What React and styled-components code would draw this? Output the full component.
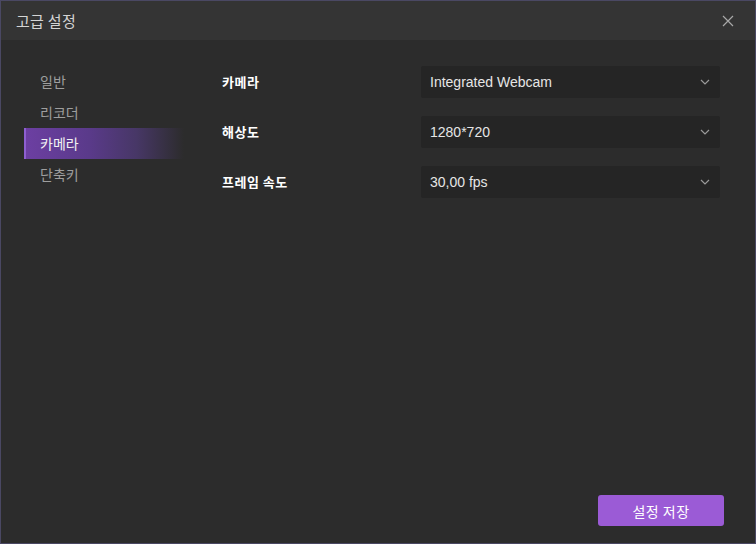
import React, { useState } from "react";
import styled, { createGlobalStyle } from "styled-components";

const GlobalStyle = createGlobalStyle`
	html, body {
		margin: 0;
		padding: 0;
		background: #2c2c2c;
	}
	* {
		box-sizing: border-box;
	}
`;

const menuItems = ["일반", "리코더", "카메라", "단축키"];

const fields = [
	{ label: "카메라", value: "Integrated Webcam" },
	{ label: "해상도", value: "1280*720" },
	{ label: "프레임 속도", value: "30,00 fps" },
];

function Chevron() {
	return (
		<svg width='10' height='6' viewBox='0 0 10 6'>
			<path d='M1 1 L5 5 L9 1' fill='none' stroke='#9a9a9a' strokeWidth='1.2' />
		</svg>
	);
}

function App() {
	const [active, setActive] = useState(2);

	return (
		<>
			<GlobalStyle />
			<Window>
				<TitleBar>
					<Title>고급 설정</Title>
					<CloseButton>
						<svg width='12' height='12' viewBox='0 0 12 12'>
							<path d='M1 1 L11 11 M11 1 L1 11' stroke='#a8a8a8' strokeWidth='1.2' />
						</svg>
					</CloseButton>
				</TitleBar>
				<Body>
					<Sidebar>
						{menuItems.map((item, i) => (
							<MenuItem key={item} $active={i === active} onClick={() => setActive(i)}>
								{item}
							</MenuItem>
						))}
					</Sidebar>
					<Content>
						{fields.map((field) => (
							<FieldRow key={field.label}>
								<FieldLabel>{field.label}</FieldLabel>
								<Select>
									<span>{field.value}</span>
									<Chevron />
								</Select>
							</FieldRow>
						))}
					</Content>
				</Body>
				<Footer>
					<SaveButton>설정 저장</SaveButton>
				</Footer>
			</Window>
		</>
	);
}

export default App;

const Window = styled.div`
	width: 756px;
	height: 544px;
	display: flex;
	flex-direction: column;
	background-color: #2c2c2c;
	border: 1px solid #4a4863;
	font-family: "Noto Sans CJK KR", "Noto Sans", sans-serif;
	overflow: hidden;
`;

const TitleBar = styled.div`
	height: 39px;
	flex-shrink: 0;
	display: flex;
	align-items: center;
	justify-content: space-between;
	padding: 0 15px 0 15px;
	background-color: #343434;
`;

const Title = styled.div`
	color: #d4d4d4;
	font-size: 15px;
	letter-spacing: 0.3px;
`;

const CloseButton = styled.div`
	width: 20px;
	height: 20px;
	display: flex;
	align-items: center;
	justify-content: center;
	margin-right: 2px;
`;

const Body = styled.div`
	flex: 1;
	display: flex;
	padding-top: 26px;
`;

const Sidebar = styled.div`
	width: 197px;
	padding-left: 23px;
	display: flex;
	flex-direction: column;
`;

const MenuItem = styled.div`
	height: 31px;
	display: flex;
	align-items: center;
	padding-bottom: 2px;
	font-size: 14px;
	color: ${(p) => (p.$active ? "#f2f2f2" : "#9e9e9e")};
	width: 160px;
	border-left: 2px solid ${(p) => (p.$active ? "#8e5fd0" : "transparent")};
	padding-left: 14px;
	background: ${(p) =>
		p.$active
			? "linear-gradient(90deg, #6c3fa2 0%, #5a3a8a 40%, #473766 70%, rgba(50, 44, 58, 0) 100%)"
			: "transparent"};
	cursor: pointer;
`;

const Content = styled.div`
	flex: 1;
	display: flex;
	flex-direction: column;
	gap: 18px;
	padding-left: 24px;
	padding-right: 35px;
`;

const FieldRow = styled.div`
	display: flex;
	align-items: center;
	justify-content: space-between;
`;

const FieldLabel = styled.div`
	color: #ffffff;
	font-size: 13px;
	font-weight: 700;
	letter-spacing: 0.5px;
	padding-bottom: 2px;
`;

const Select = styled.div`
	width: 299px;
	height: 32px;
	display: flex;
	align-items: center;
	justify-content: space-between;
	padding: 0 10px 0 9px;
	background-color: #252525;
	border-radius: 2px;
	color: #e6e6e6;
	font-size: 14px;
	font-family: "Liberation Sans", "Noto Sans CJK KR", sans-serif;
`;

const Footer = styled.div`
	display: flex;
	justify-content: flex-end;
	padding: 0 31px 17px 0;
`;

const SaveButton = styled.button`
	width: 126px;
	height: 31px;
	border: none;
	border-radius: 3px;
	background-color: #9b5bd6;
	color: #ffffff;
	font-size: 14px;
	font-family: "Noto Sans CJK KR", sans-serif;
	letter-spacing: 0.5px;
	cursor: pointer;
`;
